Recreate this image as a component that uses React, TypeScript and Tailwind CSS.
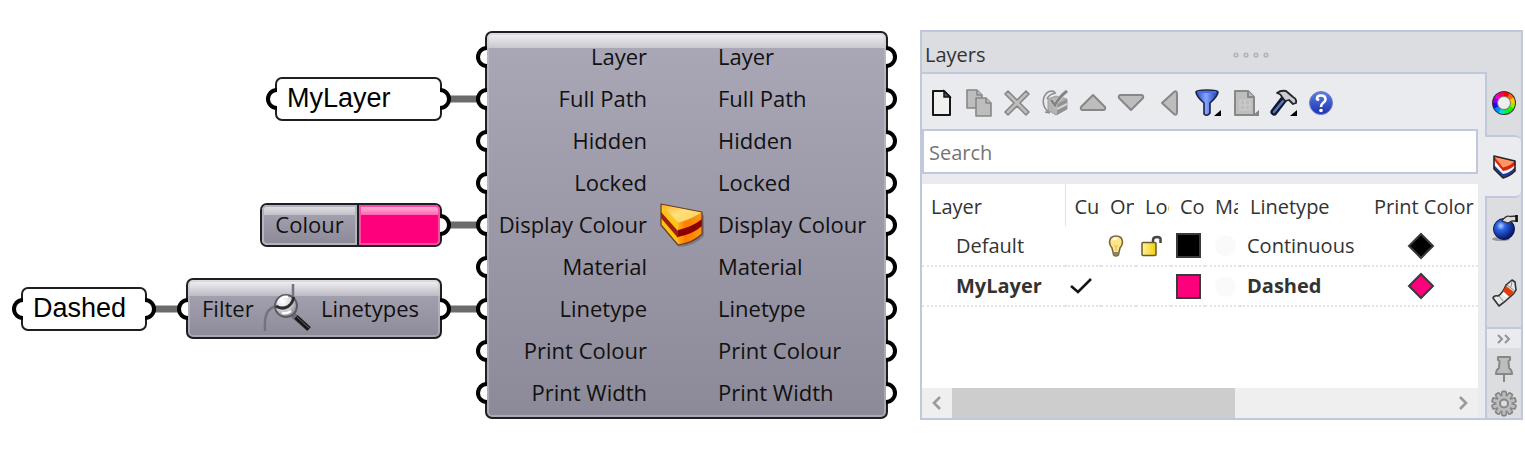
import type { ReactNode } from "react";

/* ---------- Node graph ---------- */

function Grip({ side }: { side: "in" | "out" }) {
  return side === "in" ? (
    <span className="absolute top-1/2 right-full h-[22px] w-[11px] -translate-y-1/2 rounded-l-full border-4 border-r-0 border-black bg-white" />
  ) : (
    <span className="absolute top-1/2 left-full h-[22px] w-[11px] -translate-y-1/2 rounded-r-full border-4 border-l-0 border-black bg-white" />
  );
}

const shell = "absolute rounded-[7px] border-2 border-[#1e1f22]";
const port = "relative flex h-[42px] items-center pb-[2px]";

const ports = [
  "Layer",
  "Full Path",
  "Hidden",
  "Locked",
  "Display Colour",
  "Material",
  "Linetype",
  "Print Colour",
  "Print Width",
];

function CakeIcon() {
  return (
    <svg viewBox="0 0 46 46" className="h-[46px] w-[46px] shrink-0" aria-hidden="true">
      <defs>
        <linearGradient id="cakeTop" x1="0" y1="0" x2="1" y2="1">
          <stop offset="0" stopColor="#ffa91c" />
          <stop offset=".45" stopColor="#ffe07a" />
          <stop offset="1" stopColor="#ffd050" />
        </linearGradient>
        <linearGradient id="cakeSide">
          <stop offset="0" stopColor="#ffb01a" />
          <stop offset=".3" stopColor="#ff7d00" />
          <stop offset="1" stopColor="#ff9a10" />
        </linearGradient>
      </defs>
      <path d="M5 24 21 45Q37 44 46 34V13Z" fill="#5d5968" opacity=".5" />
      <path d="M3 2V23L20 43V21Z" fill="#ffc414" />
      <path d="M3 10V16L20 36V29Z" fill="#a01f10" />
      <path d="M20 21V43Q35 41 44 32V10Q34 17 20 21Z" fill="url(#cakeSide)" />
      <path d="M20 28Q34 25 44 17V24Q35 32 20 35Z" fill="#8b0000" />
      <path d="M3 2 44 10Q34 17 20 21Z" fill="url(#cakeTop)" />
      <path d="M3 2 44 10V32Q35 41 20 43L3 23Z" fill="none" stroke="#6b3a22" strokeWidth="1.200" strokeLinejoin="round" />
    </svg>
  );
}

function LinetypeQueryIcon() {
  return (
    <svg viewBox="0 0 50 50" className="h-[50px] w-[50px] shrink-0" aria-hidden="true">
      <defs>
        <radialGradient id="lens" cx=".35" cy=".3" r=".75">
          <stop offset="0" stopColor="#fff" />
          <stop offset=".5" stopColor="#d8d8dc" />
          <stop offset="1" stopColor="#808088" />
        </radialGradient>
      </defs>
      <path d="M3 48C2 32 5 25 15 23M31 1V14" fill="none" stroke="#74737d" strokeWidth="2.500" />
      <path d="m31 32 16 14" stroke="#6e6d78" strokeWidth="6" />
      <circle cx="24" cy="23" r="11" fill="url(#lens)" stroke="#5a5a60" strokeWidth="1.800" />
      <path d="M14 23Q20 27 26 23.500Q31 20 31.500 14" fill="none" stroke="#2c2c2e" strokeWidth="3" />
      <path d="M17 18Q20 13 26 14M20 30Q25 31 29 28" fill="none" stroke="#fff" strokeWidth="2.500" />
      <path d="m34 34 13 12" stroke="#161618" strokeWidth="5" />
      <path d="m35 34 12 11" stroke="#65656c" strokeWidth="1" />
    </svg>
  );
}

function Graph() {
  return (
    <section
      aria-label="Definition"
      className="relative h-[450px] w-[920px] shrink-0 font-['Open_Sans','Noto_Sans',sans-serif] text-[22px] leading-[28px] text-[#111]"
    >
      <svg className="absolute inset-0 h-full w-full" aria-hidden="true">
        <path d="M450 99H478M450 225H478M450 309H478M154 309H180" stroke="#6b6b6b" strokeWidth="7" />
      </svg>

      <div className={`${shell} top-[77px] left-[275px] flex h-[44px] w-[167px] items-center bg-white pb-[2px] pl-[10px] font-['Liberation_Sans',Arial,sans-serif] text-[27px] text-black`}>
        <Grip side="in" />
        MyLayer
        <Grip side="out" />
      </div>

      <div className={`${shell} top-[287px] left-[21px] flex h-[44px] w-[126px] items-center bg-white pb-[2px] pl-[10px] font-['Liberation_Sans',Arial,sans-serif] text-[27px] text-black`}>
        <Grip side="in" />
        Dashed
        <Grip side="out" />
      </div>

      <div className={`${shell} top-[203px] left-[260px] flex h-[44px] w-[182px]`}>
        <span className="flex w-[95px] items-center justify-center rounded-l-[5px] border-2 border-[#b5b4be] bg-[linear-gradient(#dedee2,#c2c2c9_8px,#a2a0ae_8px,#8d8b9a)] pb-[2px]">
          Colour
        </span>
        <span className="flex-1 rounded-r-[5px] border-l-2 border-[#1e1f22] bg-[#ff007d]">
          <span className="block h-full rounded-r-[5px] border-2 border-[#ff4aa2] bg-[linear-gradient(#ffb0d6,#ff62b0_8px,#ff007d_8px)]" />
        </span>
        <Grip side="out" />
      </div>

      <div className={`${shell} top-[278px] left-[186px] flex h-[61px] w-[256px] items-center justify-between bg-[linear-gradient(#f4f4f6,#bcbbc4_16px,#a2a0ae_16px,#8d8b9a)] pr-[21px] pb-[2px] pl-[14px] shadow-[inset_0_0_0_2px_#c3c2ca80]`}>
        <Grip side="in" />
        <span>Filter</span>
        <LinetypeQueryIcon />
        <span>Linetypes</span>
        <Grip side="out" />
      </div>

      <div className={`${shell} top-[31px] left-[485px] flex w-[403px] items-center bg-[linear-gradient(#f2f2f4,#c9c9ce_15px,#a9a7b6_15px,#8c8a98)] pt-[3px] pb-[3px] shadow-[inset_0_0_0_2px_#c8c7ce80]`}>
        <ul className="w-[171px]">
          {ports.map((name) => (
            <li key={name} className={`${port} justify-end pr-[11px]`}>
              <Grip side="in" />
              {name}
            </li>
          ))}
        </ul>
        <CakeIcon />
        <ul className="flex-1">
          {ports.map((name) => (
            <li key={name} className={`${port} pl-[14px]`}>
              {name}
              <Grip side="out" />
            </li>
          ))}
        </ul>
      </div>
    </section>
  );
}

/* ---------- Layers panel ---------- */

function Icon({ children }: { children: ReactNode }) {
  return (
    <svg viewBox="0 0 28 28" className="h-[28px] w-[28px] shrink-0" aria-hidden="true">
      {children}
    </svg>
  );
}

const grey = { fill: "#bdbdbd", stroke: "#878787", strokeWidth: 2, strokeLinejoin: "round" as const };

const tools: { label: string; icon: ReactNode }[] = [
  {
    label: "New Layer",
    icon: (
      <Icon>
        <path d="M6 2H17L23 8V26H6Z" fill="#f0f0f0" stroke="#161616" strokeWidth="2" strokeLinejoin="round" />
        <path d="M17 2V8H23Z" fill="#555" stroke="#161616" strokeWidth="1.500" />
      </Icon>
    ),
  },
  {
    label: "Duplicate Layer",
    icon: (
      <Icon>
        <path d="M2 1H12L17 6V19H2Z" {...grey} strokeWidth={1.6} />
        <path d="M12 1V6H17" {...grey} strokeWidth={1.6} />
        <path d="M11 9H21L26 14V27H11Z" {...grey} strokeWidth={1.6} />
        <path d="M21 9V14H26" {...grey} strokeWidth={1.6} />
      </Icon>
    ),
  },
  {
    label: "Delete",
    icon: (
      <Icon>
        <path d="M2 5 5 2 14 11 23 2 26 5 17 14 26 23 23 26 14 17 5 26 2 23 11 14Z" {...grey} strokeWidth={1.6} />
      </Icon>
    ),
  },
  {
    label: "Set Current",
    icon: (
      <Icon>
        <path d="M7 10 15 7 26 10V20L15 26 7 21Z" fill="#b4b4b4" stroke="#9c9c9c" />
        <path d="M16 15 26 10V20L16 26Z" fill="#929292" />
        <path d="M16 20 26 15" stroke="#d2d2d2" strokeWidth="2" />
        <path d="M14 3Q7 0 3 8Q0 18 9 24M15 4Q8 5 6 10M9 24 4 23" fill="none" stroke="#8e8e8e" strokeWidth="1.600" />
        <path d="M10 11 14 16Q18 8 26 2" fill="none" stroke="#c8c8c8" strokeWidth="4" />
        <path d="M10 11 14 16Q18 8 26 2" fill="none" stroke="#808080" strokeWidth="2.600" />
      </Icon>
    ),
  },
  { label: "Move Up", icon: <Icon><path d="M14 6 26 18Q27 21 24 21H4Q1 21 2 18Z" {...grey} /></Icon> },
  { label: "Move Down", icon: <Icon><path d="M14 21 26 9Q27 6 24 6H4Q1 6 2 9Z" {...grey} /></Icon> },
  { label: "Move Up One Parent", icon: <Icon><path d="M7 14 19 3Q22 1 22 5V23Q22 27 19 25Z" {...grey} /></Icon> },
  {
    label: "Filter",
    icon: (
      <Icon>
        <defs>
          <linearGradient id="funnel">
            <stop offset="0" stopColor="#2348c8" />
            <stop offset=".45" stopColor="#86a6ff" />
            <stop offset="1" stopColor="#173bad" />
          </linearGradient>
        </defs>
        <path d="M3 3Q3 1 14 1T25 3Q25 7 17 14V24Q14 28 11 25V14Q3 7 3 3Z" fill="url(#funnel)" stroke="#1b2246" strokeWidth="1.600" />
        <path d="M5 3H23" stroke="#4a6ce0" strokeWidth="2" />
        <path d="M28 21V27H21Z" fill="#000" />
      </Icon>
    ),
  },
  {
    label: "Columns",
    icon: (
      <Icon>
        <path d="M4 2H17L23 8V26H4Z" {...grey} />
        <path d="M17 2V8H23" {...grey} />
        <path d="M9 11H19V21H9ZM9 16H19M14 11V21" fill="none" stroke="#cdcdcd" strokeWidth="1.200" />
        <path d="M28 21V27H21Z" fill="#858585" />
      </Icon>
    ),
  },
  {
    label: "Tools",
    icon: (
      <Icon>
        <path d="M15 10 5 23" stroke="#0f1734" strokeWidth="7" strokeLinecap="round" />
        <path d="M14 12 5 23" stroke="#5a78b8" strokeWidth="2.500" strokeLinecap="round" />
        <path d="M8 4Q12 1 17 2L24 8Q28 10 27 14L24 15 20 11 16 12 13 8Q12 5 8 4Z" fill="#c9ccd2" stroke="#24262a" strokeWidth="1.800" strokeLinejoin="round" />
        <path d="M28 21V27H21Z" fill="#000" />
      </Icon>
    ),
  },
  {
    label: "Help",
    icon: (
      <Icon>
        <defs>
          <linearGradient id="help" x1="0" y1="0" x2="0" y2="1">
            <stop offset="0" stopColor="#5b7de8" />
            <stop offset="1" stopColor="#1c33b0" />
          </linearGradient>
        </defs>
        <circle cx="14" cy="14" r="11.500" fill="url(#help)" stroke="#7082c6" />
        <path d="M10 10.500Q9.500 6.500 14 6.500T18.500 10.500Q18.500 12.500 16 14Q14 15.500 14 18" fill="none" stroke="#fff" strokeWidth="2.600" />
        <circle cx="10.800" cy="10.500" r="1.600" fill="#fff" />
        <circle cx="14" cy="21.500" r="1.800" fill="#fff" />
      </Icon>
    ),
  },
];

const wheel = ["#f00", "#f60", "#fc0", "#9e0", "#2e0", "#0e5", "#0dd", "#08f", "#11e", "#80e", "#e0c", "#f05"];

function ColourWheel() {
  return (
    <Icon>
      <circle cx="14" cy="13" r="12" fill="#333" />
      {wheel.map((colour, i) => (
        <circle key={colour} cx="14" cy="13" r="8.500" fill="none" stroke={colour} strokeWidth="5" pathLength="120" strokeDasharray="10.500 109.500" strokeDashoffset={30 - i * 10} />
      ))}
      <circle cx="14" cy="13" r="6.500" fill="#eee" stroke="#777" />
    </Icon>
  );
}

function LayersTabIcon() {
  return (
    <Icon>
      <path d="M4 3V16L13 25V15Z" fill="#f4f4f4" />
      <path d="M13 15V25Q20 23 25 18V9Q20 14 13 15Z" fill="#f4f4f4" />
      <path d="M4 12V16L13 25Q20 23 25 18V14Q20 20 13 21Z" fill="#1c3c9c" />
      <path d="M4 3V7L13 18Q20 17 25 12V8L13 14Z" fill="#d8260c" />
      <path d="M4 3 25 8Q20 13 13 14.500Z" fill="#ff9464" />
      <path d="M4 3 25 8V18Q20 23 13 25L4 16Z" fill="none" stroke="#2b2222" strokeWidth="1.600" strokeLinejoin="round" />
    </Icon>
  );
}

function RenderIcon() {
  return (
    <Icon>
      <defs>
        <radialGradient id="ball" cx=".35" cy=".35" r=".7">
          <stop offset="0" stopColor="#b3d1ff" />
          <stop offset=".3" stopColor="#2b63e6" />
          <stop offset="1" stopColor="#04105c" />
        </radialGradient>
      </defs>
      <ellipse cx="11" cy="24" rx="9" ry="2" fill="#999" />
      <circle cx="14" cy="14" r="10.500" fill="url(#ball)" stroke="#0c1650" />
      <path d="M12 6Q16 0 20 1.500L27 1V6L22 6 18 8Z" fill="#ddd" stroke="#333" strokeWidth="1.300" />
      <path d="M26.500 0V7" stroke="#111" strokeWidth="2.500" />
    </Icon>
  );
}

function TubeIcon() {
  return (
    <Icon>
      <path d="M3 19Q4 16 8 17Q13 14 16 6L22 1 25 3 26 11Q24 15 21 17Q16 22 9 27Z" fill="#e8e8e8" stroke="#333" strokeWidth="1.600" strokeLinejoin="round" />
      <path d="M16 7 24 13 19.500 18 13 12Z" fill="#e23c08" />
      <path d="M17 6 25 12M9 17 13 22M22 2 21 8" stroke="#888" />
      <path d="M13 14 17 18" stroke="#fff" strokeWidth="2" />
    </Icon>
  );
}

const gear = Array.from({ length: 10 }, (_, i) => i * 36);

const swatchColours = { black: "bg-black", pink: "bg-[#ff007d]" };

const rows = [
  { name: "Default", current: false, colour: "black" as const, fill: "#000", linetype: "Continuous" },
  { name: "MyLayer", current: true, colour: "pink" as const, fill: "#ff007d", linetype: "Dashed" },
];

function Bulb() {
  return (
    <svg viewBox="0 0 18 24" className="ml-[6px] h-[24px] w-[18px]" role="img" aria-label="On">
      <path d="M9 2Q15.500 2 15.500 8.500Q15.500 11 13 14L12 18Q12 22 9 22T6 18L5 14Q2.500 11 2.500 8.500Q2.500 2 9 2Z" fill="#ffe68a" stroke="#7b6434" strokeWidth="1.600" />
      <path d="M6 6Q8 4 10 4.500" stroke="#fff" strokeWidth="2" fill="none" />
      <path d="M7 11 9 13 11 11M9 13V17" stroke="#e0b850" fill="none" />
      <path d="M6.500 18H11.500V20Q9 22.500 6.500 20Z" fill="#8a8270" />
    </svg>
  );
}

function OpenLock() {
  return (
    <svg viewBox="0 0 22 24" className="ml-[4px] h-[24px] w-[22px]" role="img" aria-label="Unlocked">
      <defs>
        <linearGradient id="lock">
          <stop offset="0" stopColor="#fff2a0" />
          <stop offset="1" stopColor="#f3cf08" />
        </linearGradient>
      </defs>
      <path d="M13 9V6Q13 3 17 3T20.500 6V9" fill="none" stroke="#444" strokeWidth="2.500" />
      <rect x="2" y="8.500" width="14" height="13" rx="1" fill="url(#lock)" stroke="#6a5a2a" strokeWidth="1.500" />
    </svg>
  );
}

function LayerTable() {
  const th = "overflow-hidden pt-[4px] text-left font-normal whitespace-nowrap";
  return (
    <table className="w-full table-fixed border-collapse text-[20px] leading-[28px] text-[#333]">
      <colgroup>
        <col className="w-[143px]" />
        <col className="w-[36px]" />
        <col className="w-[35px]" />
        <col className="w-[35px]" />
        <col className="w-[34px]" />
        <col className="w-[35px]" />
        <col />
        <col className="w-[113px]" />
      </colgroup>
      <thead>
        <tr className="h-[42px]">
          <th className={`${th} border-r border-[#dfe2ea] pl-[9px]`}>Layer</th>
          <th className={`${th} pl-[9px]`}>Cu</th>
          <th className={`${th} pl-[9px]`}><span className="block w-[24px] overflow-hidden">On</span></th>
          <th className={`${th} pl-[9px]`}><span className="block w-[24px] overflow-hidden">Loc</span></th>
          <th className={`${th} pl-[9px]`}>Co</th>
          <th className={`${th} pl-[10px]`}><span className="block w-[23px] overflow-hidden">Ma</span></th>
          <th className={`${th} pl-[10px]`}>Linetype</th>
          <th className={`${th} pl-[9px]`}>Print Color</th>
        </tr>
      </thead>
      <tbody>
        {rows.map((row) => (
          <tr key={row.name} className={`h-[40px] border-b-2 border-dotted border-[#dfe3ec] ${row.current ? "font-bold" : ""}`}>
            <td className="pl-[34px]">{row.name}</td>
            <td>
              {row.current && (
                <svg viewBox="0 0 24 18" className="ml-[4px] h-[18px] w-[24px]" role="img" aria-label="Current">
                  <path d="M2 9 9 15 22 2" fill="none" stroke="#151515" strokeWidth="2.600" />
                </svg>
              )}
            </td>
            <td>{!row.current && <Bulb />}</td>
            <td>{!row.current && <OpenLock />}</td>
            <td>
              <button aria-label={`${row.name} color`} className={`ml-[5px] block h-[25px] w-[25px] border-2 border-[#3a3a3a] ${swatchColours[row.colour]}`} />
            </td>
            <td>
              <button aria-label={`${row.name} material`} className="ml-[10px] block h-[21px] w-[21px] rounded-full bg-[#fafafa]" />
            </td>
            <td className="pl-[7px]">{row.linetype}</td>
            <td>
              <button aria-label={`${row.name} print color`} className="ml-[42px] block">
                <svg viewBox="0 0 28 28" className="h-[28px] w-[28px]" aria-hidden="true">
                  <path d="M14 2 26 14 14 26 2 14Z" fill={row.fill} stroke="#3a3a3a" strokeWidth="2" />
                </svg>
              </button>
            </td>
          </tr>
        ))}
      </tbody>
    </table>
  );
}

function LayersPanel() {
  return (
    <section
      aria-label="Layers"
      className="mt-[30px] mr-[2px] flex h-[390px] min-w-0 flex-1 flex-col border-2 border-[#c0c9dc] bg-[#dcdde1] font-['Open_Sans','Noto_Sans',sans-serif]"
    >
      <header className="relative flex h-[40px] items-center pt-[6px] pl-[3px]">
        <h1 className="text-[20px] leading-[28px] text-[#333]">Layers</h1>
        <svg viewBox="0 0 36 6" className="absolute top-[20px] right-[252px] h-[6px] w-[36px]" aria-hidden="true">
          {[3, 13, 23, 33].map((x) => (
            <circle key={x} cx={x} cy="3" r="1.800" fill="none" stroke="#b4b4b6" strokeWidth="1.600" />
          ))}
        </svg>
      </header>

      <div className="flex min-h-0 flex-1">
        <div className="flex min-w-0 flex-1 flex-col border-t-2 border-[#c0c9dc] bg-[#eaebef] pr-[7px]">
          <div className="flex h-[55px] items-center gap-[10px] pt-[3px] pl-[5px]">
            {tools.map((tool) => (
              <button key={tool.label} aria-label={tool.label}>
                {tool.icon}
              </button>
            ))}
          </div>
          <input
            type="search"
            aria-label="Search layers"
            placeholder="Search"
            className="h-[45px] w-full border-2 border-[#c0c9dc] bg-white px-[5px] pt-[2px] text-[20px] leading-[28px] placeholder:text-[#757575]"
          />
          <div className="mt-[10px] flex-1 overflow-hidden bg-white">
            <LayerTable />
          </div>
          <div className="flex h-[30px] bg-[#efefef]">
            <button aria-label="Scroll left" className="flex w-[30px] items-center justify-center">
              <svg viewBox="0 0 10 14" className="h-[14px] w-[10px]" aria-hidden="true">
                <path d="M8 1 2 7 8 13" fill="none" stroke="#9b9b9b" strokeWidth="2.600" />
              </svg>
            </button>
            <div className="flex-1">
              <div className="h-full w-[57%] bg-[#cdcdcd]" />
            </div>
            <button aria-label="Scroll right" className="flex w-[30px] items-center justify-center">
              <svg viewBox="0 0 10 14" className="h-[14px] w-[10px]" aria-hidden="true">
                <path d="M2 1 8 7 2 13" fill="none" stroke="#9b9b9b" strokeWidth="2.600" />
              </svg>
            </button>
          </div>
        </div>

        <nav aria-label="Panels" className="flex w-[36px] flex-col">
          <button aria-label="Properties" className="flex h-[63px] items-center justify-center border-l-2 border-[#c0c9dc]">
            <ColourWheel />
          </button>
          <button aria-label="Layers" className="flex h-[63px] items-center justify-center rounded-tr-[6px] rounded-br-[6px] border-y-2 border-[#c0c9dc] bg-[#eaebef] pl-[2px]">
            <LayersTabIcon />
          </button>
          <button aria-label="Rendering" className="flex h-[61px] items-center justify-center border-l-2 border-[#c0c9dc]">
            <RenderIcon />
          </button>
          <button aria-label="Materials" className="flex flex-1 items-center justify-center border-l-2 border-[#c0c9dc]">
            <TubeIcon />
          </button>
          <button aria-label="More panels" className="flex h-[21px] items-center justify-center border-t-2 border-l-2 border-[#c0c9dc] bg-[#eaebef]">
            <svg viewBox="0 0 14 10" className="h-[10px] w-[14px]" aria-hidden="true">
              <path d="M1 1 5 5 1 9M8 1 12 5 8 9" fill="none" stroke="#939393" strokeWidth="2" />
            </svg>
          </button>
          <button aria-label="Pin" className="flex h-[40px] items-center justify-center border-l-2 border-[#c0c9dc]">
            <Icon>
              <path d="M8 3H20V6L18.500 7 19 14Q22 16 22 20H6Q6 16 9 14L9.500 7 8 6Z" {...grey} />
              <path d="M14 20V28" stroke="#878787" strokeWidth="2" />
            </Icon>
          </button>
          <button aria-label="Options" className="flex h-[30px] items-center justify-center border-l-2 border-[#c0c9dc]">
            <Icon>
              {gear.map((angle) => (
                <rect key={angle} x="12" y="2.500" width="4" height="6" rx="1" {...grey} transform={`rotate(${angle} 14 14.500)`} />
              ))}
              <circle cx="14" cy="14.500" r="8.500" {...grey} />
              {gear.map((angle) => (
                <rect key={angle} x="12.500" y="3.500" width="3" height="5" fill="#bdbdbd" transform={`rotate(${angle} 14 14.500)`} />
              ))}
              <circle cx="14" cy="14.500" r="4" fill="#dcdde1" stroke="#878787" strokeWidth="2" />
            </Icon>
          </button>
        </nav>
      </div>
    </section>
  );
}

export default function App() {
  return (
    <main className="flex items-start bg-white">
      <Graph />
      <LayersPanel />
    </main>
  );
}
